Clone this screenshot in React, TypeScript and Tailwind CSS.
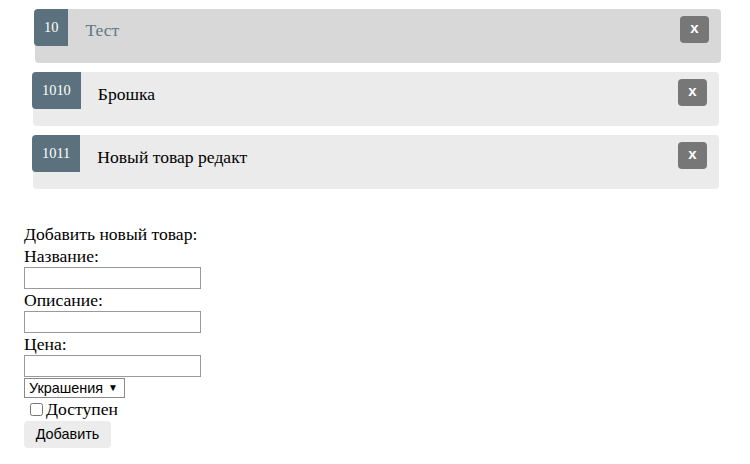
import { useState } from "react";

type Product = { id: number; title: string };

const products: Product[] = [
  { id: 10, title: "Тест" },
  { id: 1010, title: "Брошка" },
  { id: 1011, title: "Новый товар редакт" },
];

function ProductRow({ product, active }: { product: Product; active: boolean }) {
  return (
    <li
      className={
        active
          ? "ml-[2px] flex h-[54px] w-[686px] items-start rounded-[4px] bg-[#d8d8d8]"
          : "flex h-[54px] w-[686px] items-start rounded-[4px] bg-[#ebebeb]"
      }
    >
      <span className="-ml-px flex h-[37px] items-center rounded-l-[4px] bg-[#5b727e] px-[10px] text-[14.4px] text-white">
        {product.id}
      </span>
      <span
        className={
          active
            ? "ml-[17px] flex-1 pt-[11px] text-[17.6px] leading-[20px] text-[#5f7785]"
            : "ml-[17px] flex-1 pt-[12px] text-[17.6px] leading-[20px] text-black"
        }
      >
        {product.title}
      </span>
      <button
        type="button"
        className="mr-[12px] mt-[7px] flex h-[27px] w-[29px] items-center justify-center rounded-[4px] bg-[#777777] pb-[2px] font-['Liberation_Sans',Arial,sans-serif] text-[15px] font-bold text-white"
      >
        x
      </button>
    </li>
  );
}

export default function App() {
  const [available, setAvailable] = useState(false);

  return (
    <div className="h-[464px] w-[750px] bg-white font-['Liberation_Serif','Times_New_Roman',serif] text-[17.6px] text-black">
      <ul className="mx-[33px] flex flex-col gap-[9px] pt-[9px]">
        {products.map((p, i) => (
          <ProductRow key={p.id} product={p} active={i === 0} />
        ))}
      </ul>

      <form className="mt-[34px] flex flex-col items-start px-[24px]">
        <div className="h-[22px] leading-[22px]">Добавить новый товар:</div>
        <div className="h-[22px] leading-[22px]">Название:</div>
        <input className="h-[22px] w-[177px] border border-[#9a9a9a] bg-white" />
        <div className="h-[22px] leading-[22px]">Описание:</div>
        <input className="h-[22px] w-[177px] border border-[#9a9a9a] bg-white" />
        <div className="h-[22px] leading-[22px]">Цена:</div>
        <input className="h-[22px] w-[177px] border border-[#9a9a9a] bg-white" />
        <div className="mt-[1px] flex h-[20px] w-[101px] items-center border border-[#8a8a8a] bg-white font-['Liberation_Sans',Arial,sans-serif] text-[14.4px]">
          <select className="h-full flex-1 appearance-none bg-transparent pl-[4px] leading-[18px] outline-none">
            <option>Украшения</option>
          </select>
          <span className="mr-[6px] text-[10px] leading-none">▼</span>
        </div>
        <label className="flex h-[22px] items-center leading-[22px]">
          <input
            type="checkbox"
            checked={available}
            onChange={(e) => setAvailable(e.target.checked)}
            className="ml-[6px] mr-[3px] h-[13px] w-[13px] accent-[#9a9a9a]"
          />
          Доступен
        </label>
        <button
          type="button"
          className="mt-[1px] h-[27px] w-[87px] rounded-[4px] bg-[#ececec] font-['Liberation_Sans',Arial,sans-serif] text-[14.4px]"
        >
          Добавить
        </button>
      </form>
    </div>
  );
}
